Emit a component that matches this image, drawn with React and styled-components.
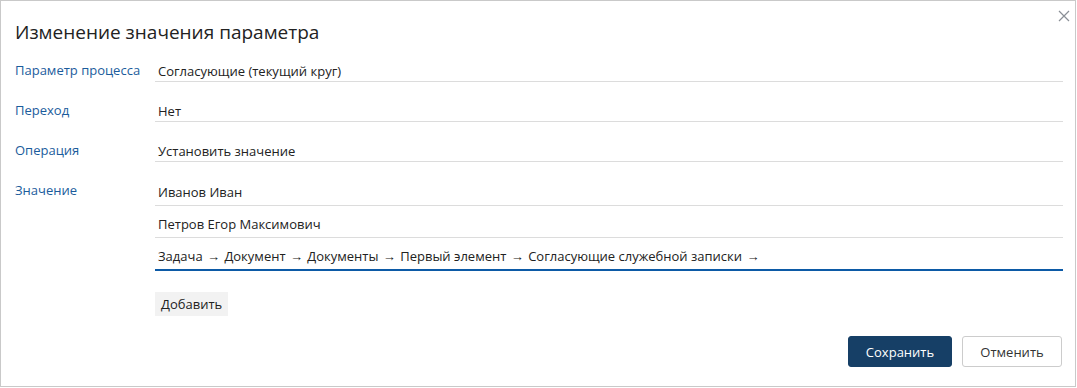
import React from "react";
import styled, { createGlobalStyle } from "styled-components";

const GlobalStyle = createGlobalStyle`
  html, body { margin: 0; padding: 0; background: #fff; }
  body { font-family: "Open Sans", "Noto Sans", sans-serif; color: #222; }
`;

const Dialog = styled.div`
  position: relative;
  box-sizing: border-box;
  width: 1076px;
  height: 387px;
  border: 1px solid #c9c9c9;
  padding: 18px 12px 0 14px;
  display: flex;
  flex-direction: column;
`;

const Close = styled.button`
  position: absolute;
  top: 7px;
  right: 3px;
  width: 16px;
  height: 16px;
  padding: 0;
  border: 0;
  background: none;
  display: flex;
  align-items: center;
  justify-content: center;
`;

const Title = styled.h1`
  margin: 0 0 16px;
  font-size: 19px;
  font-weight: 400;
  line-height: 26px;
  color: #222;
`;

const Form = styled.div`
  display: grid;
  grid-template-columns: 140px 1fr;
  row-gap: 19px;
`;

const Label = styled.div`
  font-size: 13px;
  line-height: 20px;
  color: #1b5c9c;
  margin-top: -1px;
`;

const Field = styled.div`
  font-size: 13px;
  line-height: 20px;
  padding: ${(p) => (p.$loose ? "1px 3px 3px" : "0 3px")};
  border-bottom: ${(p) => (p.$active ? "2px solid #0c5aa6" : "1px solid #dcdcdc")};
  color: #222;
  white-space: nowrap;
`;

const Arrow = styled.span`
  padding: 0 1px;
`;

const List = styled.div`
  display: flex;
  flex-direction: column;
  gap: 7px;
`;

const AddButton = styled.button`
  align-self: flex-start;
  margin-top: 14px;
  height: 24px;
  padding: 0 6px;
  border: 0;
  background: #f2f2f2;
  font-family: inherit;
  font-size: 13px;
  color: #222;
`;

const Footer = styled.div`
  display: flex;
  justify-content: flex-end;
  gap: 10px;
  margin-top: 20px;
  padding-right: 1px;
`;

const Button = styled.button`
  box-sizing: border-box;
  height: 31px;
  width: ${(p) => p.$width}px;
  border-radius: 3px;
  font-family: inherit;
  font-size: 13px;
  border: 1px solid ${(p) => (p.$primary ? "#163f66" : "#cccccc")};
  background: ${(p) => (p.$primary ? "#163f66" : "#fff")};
  color: ${(p) => (p.$primary ? "#fff" : "#333")};
`;

const path = ["Задача", "Документ", "Документы", "Первый элемент", "Согласующие служебной записки"];

const values = [
  "Иванов Иван",
  "Петров Егор Максимович",
  path.map((p) => (
    <React.Fragment key={p}>
      {p} <Arrow>→</Arrow>{" "}
    </React.Fragment>
  )),
];

export default function App() {
  return (
    <>
      <GlobalStyle />
      <Dialog>
        <Close aria-label="Закрыть">
          <svg width="12" height="12" viewBox="0 0 12 12">
            <path d="M1 1L11 11M11 1L1 11" stroke="#8a8f96" strokeWidth="1.2" fill="none" />
          </svg>
        </Close>
        <Title>Изменение значения параметра</Title>
        <Form>
          <Label>Параметр процесса</Label>
          <Field>Согласующие (текущий круг)</Field>
          <Label>Переход</Label>
          <Field>Нет</Field>
          <Label>Операция</Label>
          <Field>Установить значение</Field>
          <Label>Значение</Label>
          <List>
            {values.map((v, i) => (
              <Field key={i} $loose $active={i === values.length - 1}>
                {v}
              </Field>
            ))}
            <AddButton>Добавить</AddButton>
          </List>
        </Form>
        <Footer>
          <Button $primary $width={104}>Сохранить</Button>
          <Button $width={100}>Отменить</Button>
        </Footer>
      </Dialog>
    </>
  );
}
